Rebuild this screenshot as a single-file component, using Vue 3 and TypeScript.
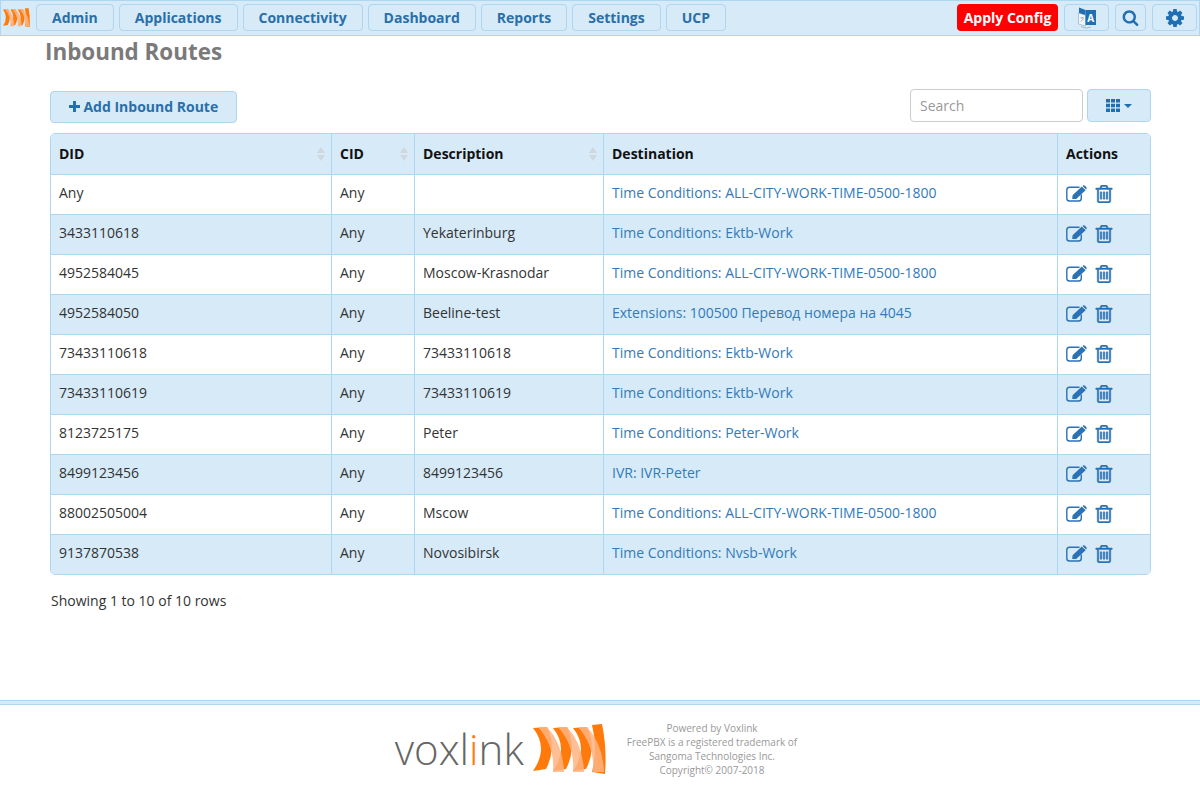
<script setup lang="ts">
interface Route {
  did: string
  description: string
  destination: string
}

const menu = ['Admin', 'Applications', 'Connectivity', 'Dashboard', 'Reports', 'Settings', 'UCP']

const routes: Route[] = [
  { did: 'Any', description: '', destination: 'Time Conditions: ALL-CITY-WORK-TIME-0500-1800' },
  { did: '3433110618', description: 'Yekaterinburg', destination: 'Time Conditions: Ektb-Work' },
  { did: '4952584045', description: 'Moscow-Krasnodar', destination: 'Time Conditions: ALL-CITY-WORK-TIME-0500-1800' },
  { did: '4952584050', description: 'Beeline-test', destination: 'Extensions: 100500 Перевод номера на 4045' },
  { did: '73433110618', description: '73433110618', destination: 'Time Conditions: Ektb-Work' },
  { did: '73433110619', description: '73433110619', destination: 'Time Conditions: Ektb-Work' },
  { did: '8123725175', description: 'Peter', destination: 'Time Conditions: Peter-Work' },
  { did: '8499123456', description: '8499123456', destination: 'IVR: IVR-Peter' },
  { did: '88002505004', description: 'Mscow', destination: 'Time Conditions: ALL-CITY-WORK-TIME-0500-1800' },
  { did: '9137870538', description: 'Novosibirsk', destination: 'Time Conditions: Nvsb-Work' },
]

// logo pieces, viewBox 0 0 73 50
const darkBand = 'M0 4 L14 3 Q24 24 13 45 L0 47 Q16 24 0 4 Z'
const lightBand = 'M5 3 L14 3 Q30 20 31 48 L20 48 Q22 22 5 3 Z'
const lastBand = 'M59 1 L69 0 Q74 24 72 50 L59 48 Q65 24 59 1 Z'
const offsets = [0, 20, 40]
</script>

<template>
  <div class="page">
    <nav class="topbar">
      <svg class="nav-logo" viewBox="0 0 73 50" preserveAspectRatio="none">
        <path v-for="x in offsets" :key="x" :d="darkBand" :transform="`translate(${x} 0)`" fill="#ff7a0a" />
        <path :d="lastBand" fill="#ff7a0a" />
        <path v-for="x in offsets" :key="x" :d="lightBand" :transform="`translate(${x} 0)`" fill="#ffb380" opacity="0.85" />
      </svg>
      <button v-for="item in menu" :key="item" class="nav-btn">{{ item }}</button>
      <span class="spacer"></span>
      <button class="apply">Apply Config</button>
      <button class="nav-btn icon-btn lang">
        <svg viewBox="0 0 20 22" width="20" height="22">
          <path d="M1.5 6 L8.5 8 V19 L1.5 17 Z" fill="#f2f6fa" stroke="#8fa5b8" stroke-width="0.6" />
          <path d="M2 0.5 L8.5 3 V8 L2 6 Z" fill="#1f6fb2" />
          <path d="M8.5 3 L19 3 V18 L8.5 18 Z" fill="#1f6fb2" />
          <path d="M3.5 11 h3.4 M5.2 10 v1 M3.8 14.5 L6.6 11.5" stroke="#7f95a8" stroke-width="0.7" fill="none" />
          <text x="13.8" y="14.5" text-anchor="middle" class="lang-a">A</text>
          <path d="M4 19.5 Q9 22.5 14 20" stroke="#9fb1c0" stroke-width="0.9" fill="none" />
        </svg>
      </button>
      <button class="nav-btn icon-btn search-btn">
        <svg viewBox="0 0 1792 1792" width="17" height="17">
          <path fill="#1f6fb2" d="M1216 832q0-185-131.5-316.5t-316.5-131.5-316.5 131.5-131.5 316.5 131.5 316.5 316.5 131.5 316.5-131.5 131.5-316.5zm512 832q0 52-38 90t-90 38q-54 0-90-38l-343-342q-179 124-399 124-143 0-273.5-55.5t-225-150-150-225-55.5-273.5 55.5-273.5 150-225 225-150 273.5-55.5 273.5 55.5 225 150 150 225 55.5 273.5q0 220-124 399l343 343q37 37 37 90z" />
        </svg>
      </button>
      <button class="nav-btn icon-btn gear-btn">
        <svg viewBox="0 0 1536 1536" width="18" height="18">
          <path fill="#1f6fb2" d="M1024 768q0-106-75-181t-181-75-181 75-75 181 75 181 181 75 181-75 75-181zm512-109v222q0 12-8 23t-20 13l-185 28q-19 54-39 91 35 50 107 138 10 12 10 25t-9 23q-27 37-99 108t-94 71q-12 0-26-9l-138-108q-44 23-91 38-16 136-29 186-7 28-36 28h-222q-14 0-24.5-8.5t-11.5-21.5l-28-184q-49-16-90-37l-141 107q-10 9-25 9-14 0-25-11-126-114-165-168-7-10-7-23 0-12 8-23 15-21 51-66.5t54-70.5q-27-50-41-99l-183-27q-13-2-21-12.5t-8-23.5v-222q0-12 8-23t19-13l186-28q14-46 39-92-40-57-107-138-10-12-10-24 0-10 9-23 26-36 98.5-107.5t94.5-71.5q13 0 26 10l138 107q44-23 91-38 16-136 29-186 7-28 36-28h222q14 0 24.5 8.5t11.5 21.5l28 184q49 16 90 37l142-107q9-9 24-9 13 0 25 10 129 119 165 170 7 8 7 22 0 12-8 23-15 21-51 66.5t-54 70.5q26 50 41 98l183 28q13 2 21 12.5t8 23.5z" />
        </svg>
      </button>
    </nav>

    <main class="content">
      <h1 class="title">Inbound Routes</h1>
      <div class="toolbar">
        <button class="btn add">
          <svg viewBox="0 0 12 12" width="11" height="11"><path fill="#1f6fb2" d="M4.4 0h3.2v4.4H12v3.2H7.6V12H4.4V7.6H0V4.4h4.4z" /></svg>
          Add Inbound Route
        </button>
        <span class="spacer"></span>
        <input class="search" placeholder="Search" />
        <button class="btn columns">
          <svg viewBox="0 0 14 13" width="14" height="13">
            <g fill="#1f6fb2">
              <template v-for="row in 3" :key="row">
                <rect v-for="col in 3" :key="col" :x="(col - 1) * 5" :y="(row - 1) * 4.75" width="4" height="3.5" />
              </template>
            </g>
          </svg>
          <span class="caret"></span>
        </button>
      </div>

      <div class="table-wrap">
        <table class="routes">
          <colgroup>
            <col style="width: 280px" />
            <col style="width: 83px" />
            <col style="width: 189px" />
            <col style="width: 454px" />
            <col />
          </colgroup>
          <thead>
            <tr>
              <th class="sortable">DID<span class="sort"></span></th>
              <th class="sortable">CID<span class="sort"></span></th>
              <th class="sortable">Description<span class="sort"></span></th>
              <th>Destination</th>
              <th>Actions</th>
            </tr>
          </thead>
          <tbody>
            <tr v-for="r in routes" :key="r.did">
              <td>{{ r.did }}</td>
              <td>Any</td>
              <td>{{ r.description }}</td>
              <td><a class="dest">{{ r.destination }}</a></td>
              <td class="actions">
                <svg class="edit" viewBox="0 0 21 17" width="21" height="17">
                  <path d="M13.5 2.2 H3.5 Q0.8 2.2 0.8 5 V13.2 Q0.8 16 3.5 16 H12.5 Q15.3 16 15.3 13.2 V9.5" fill="none" stroke="#2a72b5" stroke-width="1.4" />
                  <path d="M6.2 14 L6.6 10.2 L15.8 1.6 L19.6 5.2 L10.2 14 Z M17 0.6 Q18 0 19 0.8 L20.4 2.2 Q21 3.2 20.4 4.2 L20 4.6 L16.6 1 Z" fill="#2a72b5" />
                </svg>
                <svg class="trash" viewBox="128 128 1536 1536" width="18" height="18">
                  <path fill="#2a72b5" stroke="#2a72b5" stroke-width="40" d="M704 736v576q0 14-9 23t-23 9h-64q-14 0-23-9t-9-23v-576q0-14 9-23t23-9h64q14 0 23 9t9 23zm256 0v576q0 14-9 23t-23 9h-64q-14 0-23-9t-9-23v-576q0-14 9-23t23-9h64q14 0 23 9t9 23zm256 0v576q0 14-9 23t-23 9h-64q-14 0-23-9t-9-23v-576q0-14 9-23t23-9h64q14 0 23 9t9 23zm128 724v-948h-896v948q0 22 7 40.5t14.5 27 10.5 8.5h832q3 0 10.5-8.5t14.5-27 7-40.5zm-672-1076h448l-48-117q-7-9-17-11h-317q-10 2-17 11zm928 32v64q0 14-9 23t-23 9h-96v948q0 83-47 143.5t-113 60.5h-832q-66 0-113-58.5t-47-141.5v-952h-96q-14 0-23-9t-9-23v-64q0-14 9-23t23-9h309l70-167q15-37 54-63t79-26h320q40 0 79 26t54 63l70 167h309q14 0 23 9t9 23z" />
                </svg>
              </td>
            </tr>
          </tbody>
        </table>
      </div>
      <p class="summary">Showing 1 to 10 of 10 rows</p>
    </main>

    <footer class="footer">
      <div class="brand">
        <span class="wordmark">voxl<span class="dot-i">i</span>nk</span>
        <svg class="mark" viewBox="0 0 73 50" width="73" height="50">
          <path v-for="x in offsets" :key="x" :d="darkBand" :transform="`translate(${x} 0)`" fill="#ff7a0a" />
          <path :d="lastBand" fill="#ff7a0a" />
          <path v-for="x in offsets" :key="x" :d="lightBand" :transform="`translate(${x} 0)`" fill="#ffb380" opacity="0.85" />
        </svg>
      </div>
      <div class="legal">
        <div>Powered by Voxlink</div>
        <div>FreePBX is a registered trademark of</div>
        <div>Sangoma Technologies Inc.</div>
        <div>Copyright© 2007-2018</div>
      </div>
    </footer>
  </div>
</template>

<style scoped>
.page {
  display: flex;
  flex-direction: column;
  height: 800px;
  font-family: "Open Sans", sans-serif;
  font-size: 14px;
  color: #333;
  background: #fff;
}
.topbar {
  display: flex;
  align-items: flex-start;
  gap: 5px;
  height: 36px;
  box-sizing: border-box;
  padding: 3px 2px 0 2px;
  background: #d6eaf8;
  border: 1px solid #aed6f1;
}
.nav-logo {
  width: 27px;
  height: 19px;
  margin: 4px 1px 0 0;
}
.spacer {
  flex: 1;
}
.nav-btn {
  height: 27px;
  padding: 0 15px;
  font: 700 14px "Open Sans", sans-serif;
  color: #2a6fa8;
  background: #d6eaf8;
  border: 1px solid #aed6f1;
  border-radius: 4px;
}
.icon-btn {
  display: flex;
  align-items: center;
  justify-content: center;
  padding: 0;
  margin-left: 1px;
}
.lang { width: 45px; }
.search-btn { width: 31px; }
.gear-btn { width: 45px; }
.apply {
  height: 27px;
  width: 101px;
  padding: 0;
  font: 700 14px "Open Sans", sans-serif;
  color: #fff;
  background: #f00;
  border: 0;
  border-radius: 4px;
}
.lang-a {
  font: 700 10px "Open Sans", sans-serif;
  fill: #fff;
}
.content {
  flex: 1;
  padding: 0 49px 0 50px;
}
.title {
  margin: 1px 0 0 -5px;
  font-size: 22.4px;
  line-height: 30px;
  font-weight: 700;
  color: #7a7a7a;
}
.toolbar {
  display: flex;
  align-items: center;
  margin-top: 22px;
  height: 33px;
}
.btn {
  height: 33px;
  font: 700 14px "Open Sans", sans-serif;
  color: #2a6fa8;
  background: #d6eaf8;
  border: 1px solid #aed6f1;
  border-radius: 4px;
}
.add {
  width: 187px;
  height: 32px;
  margin-top: 2px;
  padding: 0;
}
.search {
  width: 173px;
  height: 33px;
  box-sizing: border-box;
  padding: 0 9px;
  font: 14px "Open Sans", sans-serif;
  color: #555;
  border: 1px solid #ccc;
  border-radius: 4px;
  outline: none;
}
.search::placeholder {
  color: #999;
}
.columns {
  display: flex;
  align-items: center;
  justify-content: center;
  gap: 4px;
  width: 64px;
  margin-left: 4px;
  padding: 0;
}
.caret {
  width: 0;
  height: 0;
  border-top: 4px solid #1f6fb2;
  border-left: 4px solid transparent;
  border-right: 4px solid transparent;
}
.table-wrap {
  margin-top: 11px;
  border: 1px solid #aed6f1;
  border-radius: 5px;
  overflow: hidden;
}
.routes {
  width: 100%;
  table-layout: fixed;
  border-collapse: separate;
  border-spacing: 0;
}
.routes th,
.routes td {
  box-sizing: border-box;
  height: 40px;
  padding: 0 8px 4px;
  text-align: left;
  border-left: 1px solid #aed6f1;
  border-top: 1px solid #aed6f1;
}
.routes th:first-child,
.routes td:first-child {
  border-left: 0;
}
.routes th {
  border-top: 0;
  padding-bottom: 2px;
  font-weight: 700;
  color: #111;
  background: #d6eaf8;
}
.routes tbody tr:nth-child(even) td {
  background: #d6eaf8;
}
.sortable {
  position: relative;
}
.sort {
  position: absolute;
  right: 6px;
  top: 13px;
  width: 8px;
  height: 14px;
}
.sort::before,
.sort::after {
  content: "";
  position: absolute;
  left: 0;
  border-left: 4px solid transparent;
  border-right: 4px solid transparent;
}
.sort::before {
  top: 0;
  border-bottom: 6px solid #d0d8de;
}
.sort::after {
  bottom: 0;
  border-top: 6px solid #d0d8de;
}
.dest {
  color: #337ab7;
}
.actions {
  white-space: nowrap;
}
.actions svg {
  vertical-align: middle;
}
.edit {
  margin-right: 8px;
}
.summary {
  margin: 16px 0 0 1px;
  line-height: 20px;
}
.footer {
  display: flex;
  justify-content: center;
  align-items: center;
  gap: 21px;
  height: 100px;
  box-sizing: border-box;
  padding: 0 8px 4px 0;
  border-top: 1px solid #aed6f1;
  position: relative;
}
.footer::before {
  content: "";
  position: absolute;
  left: 0;
  right: 0;
  top: 0;
  height: 3px;
  background: #d6eaf8;
  border-bottom: 1px solid #aed6f1;
}
.brand {
  display: flex;
  align-items: center;
  gap: 9px;
}
.wordmark {
  font-size: 42px;
  font-weight: 300;
  color: #666;
}
.dot-i {
  color: #ff7a0a;
}
.legal {
  font-size: 10px;
  line-height: 14px;
  text-align: center;
  color: #999;
}
</style>
